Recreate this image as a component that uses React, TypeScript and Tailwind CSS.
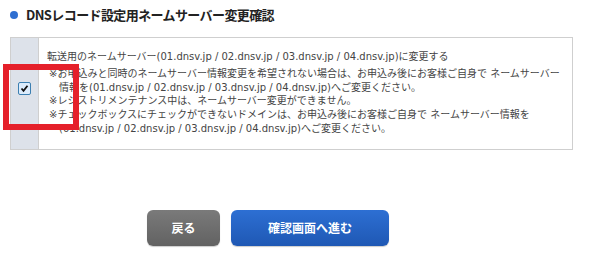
export default function App() {
  const font = { fontFamily: '"DejaVu Sans", "Noto Sans CJK JP", sans-serif' };
  return (
    <div className="relative w-[600px] h-[258px] bg-white text-[#333]" style={font}>
      <div className="flex items-center h-[30px] pl-[10px] gap-[8px]">
        <span className="block w-[8px] h-[8px] rounded-full bg-[#2f6fd1]" />
        <h1
          className="text-[13px] font-bold text-[#222] tracking-[-0.6px]"
          style={{ fontFamily: '"Noto Sans CJK JP", sans-serif' }}
        >
          DNSレコード設定用ネームサーバー変更確認
        </h1>
      </div>

      <div className="ml-[10px] mt-[7px] w-[563px] h-[113px] flex border border-[#cfcfcf]">
        <div className="w-[28px] bg-[#dde2ea] border-r border-[#cfcfcf] flex justify-center pt-[44px]">
          <div className="w-[13px] h-[13px] border border-[#3c7fb1] bg-[#dcecfc] rounded-[2px] flex items-center justify-center">
            <svg width="9" height="9" viewBox="0 0 9 9">
              <path d="M1.5 4.5 L3.5 6.8 L7.5 1.8" stroke="#111" strokeWidth="1.8" fill="none" />
            </svg>
          </div>
        </div>
        <div className="flex-1 pl-[8px] pt-[12px] text-[10px] leading-[13.8px] text-[#444] whitespace-nowrap">
          <p className="mb-[3px]">
            転送用のネームサーバー(01.dnsv.jp / 02.dnsv.jp / 03.dnsv.jp / 04.dnsv.jp)に変更する
          </p>
          <div className="pl-[2px]">
            <p className="pl-[10px] -indent-[10px]">
              ※お申込みと同時のネームサーバー情報変更を希望されない場合は、お申込み後にお客様ご自身で ネームサーバー
              <br />
              情報を(01.dnsv.jp / 02.dnsv.jp / 03.dnsv.jp / 04.dnsv.jp)へご変更ください。
            </p>
            <p>※レジストリメンテナンス中は、ネームサーバー変更ができません。</p>
            <p className="pl-[10px] -indent-[10px]">
              ※チェックボックスにチェックができないドメインは、お申込み後にお客様ご自身で ネームサーバー情報を
              <br />
              (01.dnsv.jp / 02.dnsv.jp / 03.dnsv.jp / 04.dnsv.jp)へご変更ください。
            </p>
          </div>
        </div>
      </div>

      <div className="flex gap-[11px] pl-[147px] mt-[60px]">
        <button
          className="w-[73px] h-[36px] rounded-[6px] bg-gradient-to-b from-[#7a7a7a] to-[#626262] text-white text-[12px] font-bold shadow-[0_1px_1px_rgba(0,0,0,0.2)]"
          style={{ fontFamily: '"Noto Sans CJK JP", sans-serif' }}
        >
          戻る
        </button>
        <button
          className="w-[158px] h-[36px] rounded-[6px] bg-gradient-to-b from-[#2d6fd3] to-[#1f58b4] text-white text-[12px] font-bold shadow-[0_1px_1px_rgba(0,0,0,0.2)]"
          style={{ fontFamily: '"Noto Sans CJK JP", sans-serif' }}
        >
          確認画面へ進む
        </button>
      </div>

      <div className="absolute left-[3px] top-[64px] w-[76px] h-[66px] border-[6px] border-[#e5202a] pointer-events-none" />
    </div>
  );
}
